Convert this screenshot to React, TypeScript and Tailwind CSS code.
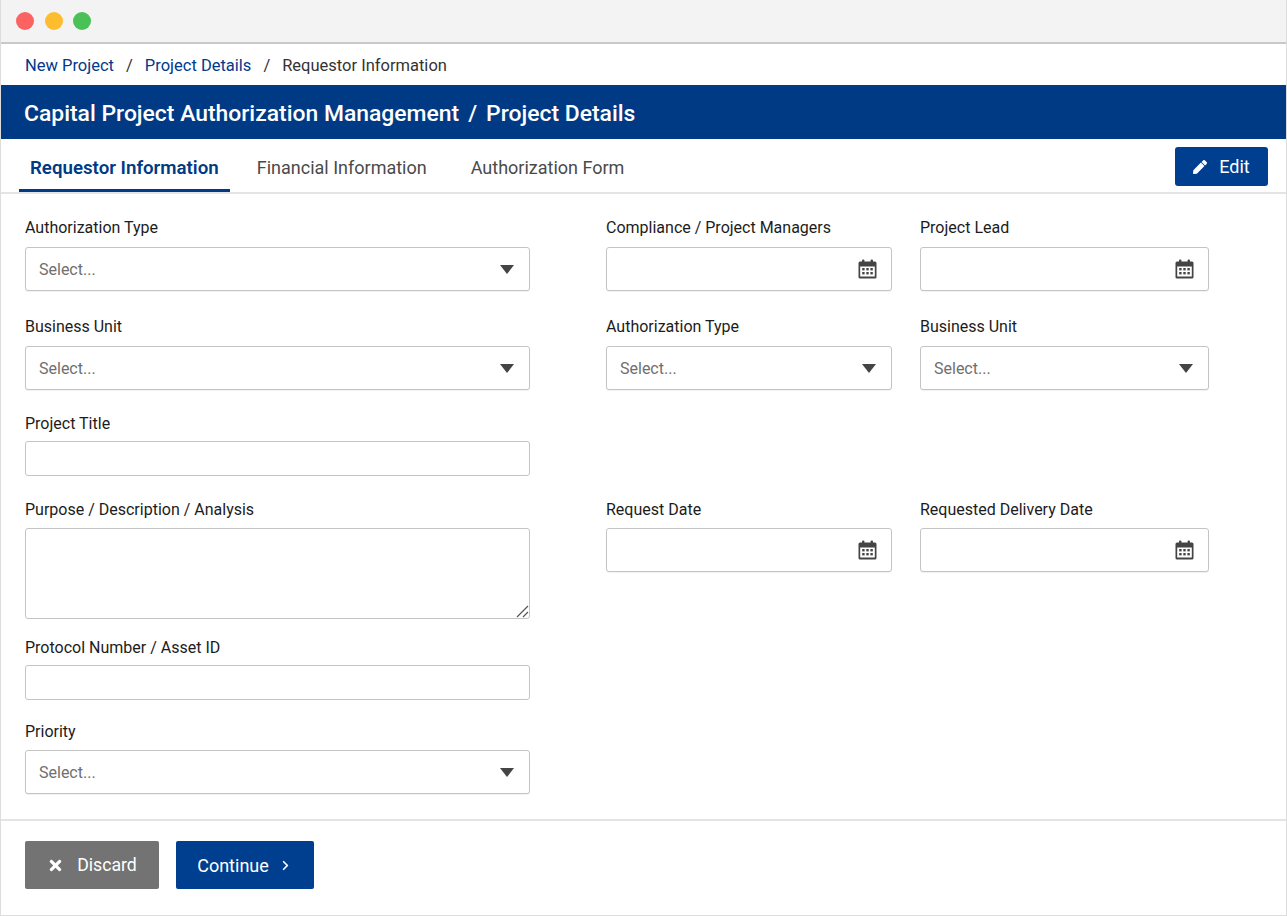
import { ChevronRight } from "lucide-react";
import { FaPen, FaTimes } from "react-icons/fa";

function Caret() {
  return (
    <svg width="14" height="9" viewBox="0 0 14 9" className="shrink-0">
      <path d="M0 0h14L7 9z" fill="#444444" />
    </svg>
  );
}

function CalendarIcon() {
  return (
    <svg width="19" height="20" viewBox="0 0 19 20" className="shrink-0">
      <rect x="4" y="0.5" width="2.4" height="4.5" rx="1" fill="#444444" />
      <rect x="12.6" y="0.5" width="2.4" height="4.5" rx="1" fill="#444444" />
      <path
        fillRule="evenodd"
        d="M2 2.5h15a1.5 1.5 0 0 1 1.5 1.5v14a1.5 1.5 0 0 1-1.5 1.5H2A1.5 1.5 0 0 1 .5 18V4A1.5 1.5 0 0 1 2 2.5zM2.2 7.5v10h14.6v-10z"
        fill="#444444"
      />
      <g fill="#444444">
        <rect x="4.2" y="9" width="2.4" height="2.4" />
        <rect x="8.3" y="9" width="2.4" height="2.4" />
        <rect x="12.4" y="9" width="2.4" height="2.4" />
        <rect x="4.2" y="13" width="2.4" height="2.4" />
        <rect x="8.3" y="13" width="2.4" height="2.4" />
        <rect x="12.4" y="13" width="2.4" height="2.4" />
      </g>
    </svg>
  );
}

function Label({ text, className }: { text: string; className: string }) {
  return (
    <div className={`h-5 text-[16px] leading-[22px] text-[#1c1c1c] ${className}`}>
      {text}
    </div>
  );
}

function SelectBox() {
  return (
    <div className="h-[44px] flex items-center justify-between pl-[13px] pr-[15px] bg-white border border-[#c4c4c4] rounded-[3px] shadow-[0_1px_1px_rgba(0,0,0,0.06)]">
      <span className="pt-[2px] text-[16px] text-[#6f6f6f]">Select...</span>
      <Caret />
    </div>
  );
}

function DateBox() {
  return (
    <div className="h-[44px] flex items-center justify-end pr-[14px] bg-white border border-[#c4c4c4] rounded-[3px] shadow-[0_1px_1px_rgba(0,0,0,0.06)]">
      <CalendarIcon />
    </div>
  );
}

function TextBox() {
  return (
    <input
      type="text"
      className="block w-full h-[35px] bg-white border border-[#c4c4c4] rounded-[3px] outline-none"
    />
  );
}

export default function App() {
  return (
    <div
      className="w-[1287px] h-[916px] overflow-hidden bg-white border-x border-b border-[#dddddd] flex flex-col"
      style={{ fontFamily: '"Roboto", "Liberation Sans", sans-serif' }}
    >
      {/* Window chrome */}
      <div className="h-[44px] shrink-0 flex items-center gap-[10.5px] pl-[15px] pb-[1px] bg-[#f3f3f3] border-b-2 border-[#c9c9c9]">
        <span className="w-[18px] h-[18px] rounded-full bg-[#fb6362]" />
        <span className="w-[18px] h-[18px] rounded-full bg-[#fdbd2e]" />
        <span className="w-[18px] h-[18px] rounded-full bg-[#49c157]" />
      </div>

      {/* Breadcrumb */}
      <div className="h-[41px] shrink-0 flex items-center pl-6 pt-[4px] text-[16.5px]">
        <span className="text-[#003a8c]">New Project</span>
        <span className="mx-[12px] text-[#333333]">/</span>
        <span className="text-[#003a8c]">Project Details</span>
        <span className="mx-[12px] text-[#333333]">/</span>
        <span className="text-[#333333]">Requestor Information</span>
      </div>

      <div className="h-[54px] shrink-0 flex items-center pl-[23px] pt-[4px] bg-[#003a85] text-white text-[22.9px] font-medium">
        Capital Project Authorization Management
        <span className="mx-[9px]">/</span>
        Project Details
      </div>

      {/* Tabs */}
      <div className="h-[55px] shrink-0 flex items-end justify-between pl-[18px] pr-[18px] border-b-2 border-[#e4e4e4]">
        <div className="flex text-[18px] text-[#4a4a4a]">
          <div className="h-[50px] -mb-[1px] px-[11px] pt-[12px] text-[18.7px] font-semibold text-[#003a85] border-b-[3px] border-[#003a85]">
            Requestor Information
          </div>
          <div className="ml-[27px] h-[50px] pt-[12px]">Financial Information</div>
          <div className="ml-[44px] h-[50px] pt-[12px]">Authorization Form</div>
        </div>
        <button
          type="button"
          className="w-[93px] h-[39px] mb-[6px] flex items-center justify-center gap-[12px] rounded-[3px] bg-[#003f8f] text-white text-[18px]"
        >
          <FaPen size={14} />
          Edit
        </button>
      </div>

      {/* Form */}
      <div className="flex-1 flex pl-6 pt-[23px] border-b-2 border-[#e4e4e4]">
        <div className="w-[505px] shrink-0">
          <Label text="Authorization Type" className="mb-[10px]" />
          <SelectBox />
          <Label text="Business Unit" className="mt-[25px] mb-[10px]" />
          <SelectBox />
          <Label text="Project Title" className="mt-[23px] mb-2" />
          <TextBox />
          <Label text="Purpose / Description / Analysis" className="mt-[23px] mb-[9px]" />
          <div className="relative">
            <textarea className="block w-full h-[91px] bg-white border border-[#c4c4c4] rounded-[3px] outline-none resize-none" />
            {/* resize grip */}
            <svg width="13" height="13" viewBox="0 0 13 13" className="absolute right-[1px] bottom-[1px]">
              <path d="M1 12 12 1M7 12l5-5" stroke="#555555" strokeWidth="1.2" fill="none" />
            </svg>
          </div>
          <Label text="Protocol Number / Asset ID" className="mt-[18px] mb-2" />
          <TextBox />
          <Label text="Priority" className="mt-[21px] mb-[9px]" />
          <SelectBox />
        </div>

        <div className="ml-[76px] w-[604px] shrink-0 grid grid-cols-[286px_289px] gap-x-[28px] content-start">
          <div>
            <Label text="Compliance / Project Managers" className="mb-[10px]" />
            <DateBox />
          </div>
          <div>
            <Label text="Project Lead" className="mb-[10px]" />
            <DateBox />
          </div>
          <div className="mt-[25px]">
            <Label text="Authorization Type" className="mb-[10px]" />
            <SelectBox />
          </div>
          <div className="mt-[25px]">
            <Label text="Business Unit" className="mb-[10px]" />
            <SelectBox />
          </div>
          <div className="mt-[109px]">
            <Label text="Request Date" className="mb-[9px]" />
            <DateBox />
          </div>
          <div className="mt-[109px]">
            <Label text="Requested Delivery Date" className="mb-[9px]" />
            <DateBox />
          </div>
        </div>
      </div>

      {/* Footer */}
      <div className="h-[94px] shrink-0 flex items-start gap-[17px] pl-6 pt-[20px]">
        <button
          type="button"
          className="w-[134px] h-[48px] flex items-center justify-center gap-[13px] rounded-[2px] bg-[#737373] text-white text-[17.7px]"
        >
          <FaTimes size={17} />
          Discard
        </button>
        <button
          type="button"
          className="w-[138px] h-[48px] flex items-center justify-center gap-[9px] rounded-[2px] bg-[#003f8f] text-white text-[18px]"
        >
          Continue
          <ChevronRight size={15} strokeWidth={2.75} />
        </button>
      </div>
    </div>
  );
}
